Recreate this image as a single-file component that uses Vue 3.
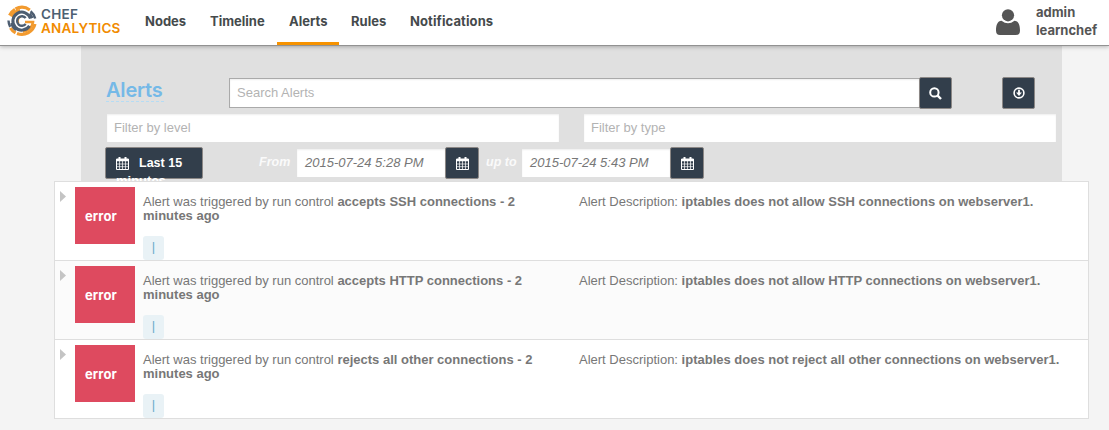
<script setup>
const nav = [
  { label: 'Nodes', cls: 'nodes' },
  { label: 'Timeline', cls: 'timeline' },
  { label: 'Alerts', cls: 'alerts active' },
  { label: 'Rules', cls: 'rules' },
  { label: 'Notifications', cls: 'notifications' },
]
const alerts = [
  { run: 'accepts SSH connections - 2', cls: 'ssh', desc: 'iptables does not allow SSH connections on webserver1.' },
  { run: 'accepts HTTP connections - 2', cls: 'http', desc: 'iptables does not allow HTTP connections on webserver1.' },
  { run: 'rejects all other connections - 2', cls: 'other', desc: 'iptables does not reject all other connections on webserver1.' },
]
</script>

<template>
  <div class="page">
    <header class="topbar">
      <svg class="mark" viewBox="0 0 32 32" fill="none">
        <g stroke="#f29a2e" stroke-width="3.2">
          <path d="M3.6 10.5A13.5 13.5 0 0 1 9 4.4M9.5 4A13.5 13.5 0 0 1 23.8 5" />
          <path d="M4.5 23A13.5 13.5 0 0 0 9.6 27.9M11 28.5A13.5 13.5 0 0 0 29 19" />
          <path d="M5.6 11.7A11 11 0 0 1 14 5.2M17 26.8A11 11 0 0 0 27 17H19" stroke-width="2.6" />
          <path d="M14.8 11.8A4.3 4.3 0 0 0 12.5 18.5" stroke-width="2.2" />
        </g>
        <g stroke="#4d5d70" stroke-width="3">
          <path d="M24.5 13.6A9 9 0 1 0 23.5 20.9" />
          <path d="M19.7 13A4.8 4.8 0 1 0 19.7 19" stroke-width="2.4" />
          <path d="M24.6 6.2A13.5 13.5 0 0 1 29.2 13.5M2.5 15.5A13.5 13.5 0 0 0 4.2 21.8" stroke-width="2.4" />
          <path d="M23.7 8.4A11 11 0 0 1 26.4 13M5.5 18A11 11 0 0 0 10 25.2" stroke-width="2.2" />
        </g>
      </svg>
      <div class="brand"><span class="chef">CHEF</span><span class="analytics">ANALYTICS</span></div>
      <nav class="nav">
        <a v-for="n in nav" :key="n.label" :class="n.cls">{{ n.label }}</a>
      </nav>
      <svg class="person" viewBox="0 0 24 26" fill="#555">
        <circle cx="12" cy="6.3" r="6.1" />
        <path d="M5.5 11.8Q12 16.8 18.5 11.8C22.5 12 24 16.2 24 21.5Q24 26 20 26H4Q0 26 0 21.5C0 16.2 1.5 12 5.5 11.8Z" />
      </svg>
      <div class="account"><span class="admin">admin</span><span class="org">learnchef</span></div>
    </header>

    <section class="panel">
      <div class="search-row">
        <h1>Alerts</h1>
        <div class="field search">Search Alerts</div>
        <button class="dark find">
          <svg width="13" height="13" viewBox="0 0 13 13" fill="none" stroke="#fff" stroke-width="2"><circle cx="5.4" cy="5.4" r="4.2" /><path d="M8.4 8.4L12 12" stroke-width="2.4" /></svg>
        </button>
        <button class="dark download">
          <svg width="12" height="12" viewBox="0 0 12 12" fill="none" stroke="#fff"><circle cx="6" cy="6" r="4.9" stroke-width="1.6" /><path d="M6 2.7V6" stroke-width="1.8" /><path d="M3.1 5.5H8.9L6 8.9Z" fill="#fff" stroke="none" /></svg>
        </button>
      </div>
      <div class="filter-row">
        <div class="field level">Filter by level</div>
        <div class="field type">Filter by type</div>
      </div>
      <div class="date-row">
        <button class="dark range">
          <svg class="cal" viewBox="0 0 13 13"><path d="M.5 2H12.5V12.5H.5Z" fill="none" stroke="#fff" /><path d="M0 2H13V4.3H0ZM2.5 0H4.5V3H2.5ZM8.5 0H10.5V3H8.5Z" fill="#fff" /><path d="M3.5 4V12M6.5 4V12M9.5 4V12M1 7H12M1 9.7H12" stroke="#fff" stroke-width=".7" /></svg>
          <span class="last">Last 15</span>
          <span class="wrapped">minutes <svg width="8" height="5" viewBox="0 0 8 5" fill="none" stroke="#fff"><path d="M1 1L4 4L7 1" /></svg></span>
        </button>
        <span class="when from">From</span>
        <div class="field date">2015-07-24 5:28 PM</div>
        <button class="dark">
          <svg class="cal" viewBox="0 0 13 13"><path d="M.5 2H12.5V12.5H.5Z" fill="none" stroke="#fff" /><path d="M0 2H13V4.3H0ZM2.5 0H4.5V3H2.5ZM8.5 0H10.5V3H8.5Z" fill="#fff" /><path d="M3.5 4V12M6.5 4V12M9.5 4V12M1 7H12M1 9.7H12" stroke="#fff" stroke-width=".7" /></svg>
        </button>
        <span class="when to">up to</span>
        <div class="field date">2015-07-24 5:43 PM</div>
        <button class="dark">
          <svg class="cal" viewBox="0 0 13 13"><path d="M.5 2H12.5V12.5H.5Z" fill="none" stroke="#fff" /><path d="M0 2H13V4.3H0ZM2.5 0H4.5V3H2.5ZM8.5 0H10.5V3H8.5Z" fill="#fff" /><path d="M3.5 4V12M6.5 4V12M9.5 4V12M1 7H12M1 9.7H12" stroke="#fff" stroke-width=".7" /></svg>
        </button>
      </div>
    </section>

    <main class="list">
      <article v-for="a in alerts" :key="a.cls" class="row" :class="a.cls">
        <svg class="arrow" width="6" height="11" viewBox="0 0 6 11"><path d="M0 0L6 5.5L0 11Z" fill="#c4c4c4" /></svg>
        <div class="badge">error</div>
        <div class="message">
          <p>Alert was triggered by run control <b>{{ a.run }}</b></p>
          <p><b>minutes ago</b></p>
          <span class="tag">|</span>
        </div>
        <p class="desc">Alert Description: <b>{{ a.desc }}</b></p>
      </article>
    </main>
  </div>
</template>

<style>
body { background: #f4f4f4; }
</style>

<style scoped>
* { box-sizing: border-box; }
.page { width: 1109px; height: 430px; overflow: hidden; background: #f4f4f4; font-family: "Liberation Sans", Arial, sans-serif; font-size: 13px; color: #777; }
.topbar { position: relative; height: 46px; display: flex; background: #fff; border-bottom: 1px solid #929292; box-shadow: 0 1px 4px rgba(0, 0, 0, .25); font-family: Inter, sans-serif; font-weight: 700; }
.mark { width: 32px; height: 32px; margin: 5px 0 0 6px; flex: none; }
.brand { width: 91px; margin: 7px 0 0 3px; font-size: 13.5px; line-height: 14px; font-weight: 600; white-space: nowrap; }
.brand span { display: block; }
.chef { color: #4d6072; letter-spacing: .3px; }
.analytics { color: #f18b00; letter-spacing: .2px; }
.nav { display: flex; width: 394px; height: 45px; margin-left: 1px; }
.nav a { height: 45px; padding-left: 12px; line-height: 43px; color: #454a4c; white-space: nowrap; border-bottom: 3px solid transparent; font-size: 13px; }
.nodes { width: 65px; }
.timeline { width: 79px; }
.nav .alerts { width: 62px; border-color: #f69200; }
.nav .rules { width: 59px; }
.nav .notifications { letter-spacing: .1px; }
.person { width: 24px; height: 26px; margin: 9px 0 0 469px; flex: none; }
.account { margin: 3px 0 0 16px; line-height: 18px; color: #555; }
.account span { display: block; }
.panel { width: 981px; height: 135px; margin-left: 81px; padding: 31px 0 0 25px; background: #e0e0e0; }
.search-row { display: flex; height: 32px; }
h1 { width: 58px; height: 25px; margin: 0 65px 0 0; font: 600 20px/27px Inter, sans-serif; color: #75b9e7; letter-spacing: -.2px; border-bottom: 1px dashed #b5dcf4; }
.field { height: 28px; padding-left: 7px; background: #fff; color: #b3b3b3; line-height: 28px; white-space: nowrap; box-shadow: inset 0 1px 2px rgba(0, 0, 0, .07); }
.field.search { width: 691px; height: 30px; margin-top: 1px; border: 1px solid #aaa; line-height: 28px; }
.dark { width: 33px; height: 32px; padding: 0; background: #323e4b; border: 1px solid #8b8785; border-radius: 2px; display: flex; align-items: center; justify-content: center; margin: 0; flex: none; }
.find { margin-left: -1px; }
.download { margin-left: 50px; }
.filter-row { display: flex; height: 28px; margin: 5px 0 0 1px; }
.level { width: 452px; margin-right: 25px; }
.type { width: 472px; }
.date-row { display: flex; margin-top: 5px; margin-left: -1px; }
.date-row .dark { width: 34px; }
.date-row .range { width: 98px; position: relative; justify-content: flex-start; padding-left: 10px; font: 700 12.5px "Liberation Sans", Arial, sans-serif; color: #fff; }
.last { margin-left: 10px; white-space: nowrap; }
.wrapped { position: absolute; left: 10px; top: 25px; white-space: nowrap; font-size: 13px; line-height: 15px; }
.wrapped svg { margin-left: 6px; }
.cal { width: 13px; height: 13px; }
.when { line-height: 31px; font-style: italic; font-weight: 700; font-size: 12.5px; color: #fafafa; white-space: nowrap; }
.from { width: 38px; margin-left: 56px; }
.to { width: 36px; margin-left: 7px; }
.date { width: 148px; margin-top: 2px; padding-left: 8px; font-style: italic; color: #777; }
.list { position: relative; width: 1035px; height: 238px; margin-left: 54px; border: 1px solid #dedede; border-bottom: 0; background: #fff; }
.row { display: flex; height: 79px; border-bottom: 1px solid #dedede; }
.http { background: #fbfbfb; }
.arrow { margin: 9px 0 0 5px; }
.badge { width: 60px; height: 57px; margin: 5px 0 0 9px; padding-left: 10px; background: #de4a5f; color: #fff; font: 700 13px/58px Inter, sans-serif; letter-spacing: .1px; }
.message { width: 436px; margin: 13px 0 0 8px; }
p { margin: 0; line-height: 14px; white-space: nowrap; }
.tag { display: block; width: 21px; height: 24px; margin-top: 13px; border-radius: 3px; background: #e9f2f6; color: #6cacca; text-align: center; line-height: 22px; }
.desc { margin-top: 13px; }
</style>
